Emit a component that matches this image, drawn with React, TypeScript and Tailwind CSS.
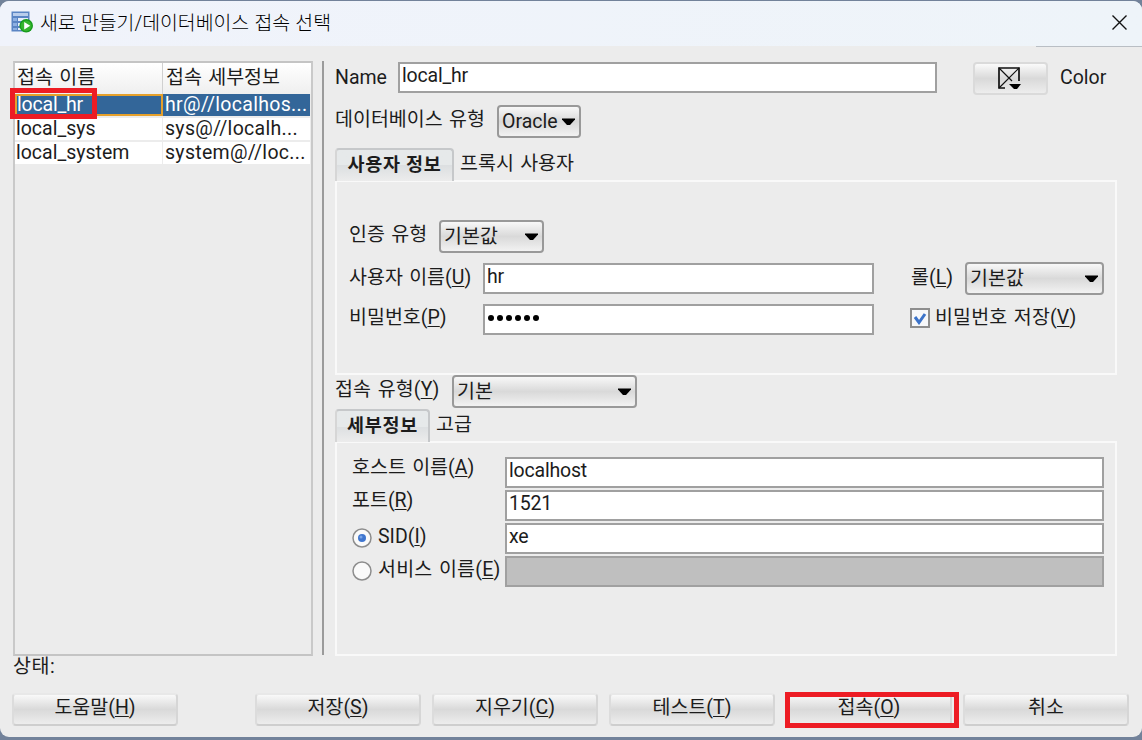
import React from 'react';

interface Connection {
  name: string;
  details: string;
}

const connections: Connection[] = [
  { name: 'local_hr', details: 'hr@//localhos...' },
  { name: 'local_sys', details: 'sys@//localh...' },
  { name: 'local_system', details: 'system@//loc...' },
];

interface LabelProps {
  text: string;
  mnemonic?: string;
  className?: string;
}

const Label: React.FC<LabelProps> = ({ text, mnemonic, className = '' }) => (
  <span className={`whitespace-nowrap leading-6 [word-spacing:1.5px] ${className}`}>
    {text}
    {mnemonic && (
      <>
        (<span className="underline decoration-1 underline-offset-2">{mnemonic}</span>)
      </>
    )}
  </span>
);

const Arrow = () => (
  <svg width="13" height="8" viewBox="0 0 13 8" className="shrink-0">
    <path d="M0 0.5h13v1L8 7H5L0 1.5z" fill="#000" />
  </svg>
);

const Select: React.FC<{ value: string; className?: string }> = ({ value, className = '' }) => (
  <button
    className={`flex h-[33px] items-center justify-between rounded-[4px] border-2 border-[#999] bg-linear-to-b from-[#f8f8f8] via-[#d9d9d9] to-[#f2f2f2] pr-[4px] pl-[3px] ${className}`}
  >
    <span className="whitespace-nowrap leading-6">{value}</span>
    <Arrow />
  </button>
);

const Field: React.FC<{ value?: string; className?: string }> = ({ value, className = '' }) => (
  <div className={`h-[31px] border-2 border-[#a0a0a0] pl-[2px] leading-[23px] tracking-[-0.2px] ${className}`}>
    {value}
  </div>
);

const PushButton: React.FC<LabelProps> = ({ text, mnemonic, className = '' }) => (
  <button
    className={`flex h-[33px] w-[166px] justify-center rounded-[4px] border-2 border-t-[#e8e8e8] border-r-[#d6d6d6] border-b-[#cecece] border-l-[#dcdcdc] bg-linear-to-b from-[#f9f9f9] via-[#d9d9d9] to-[#ededed] pt-px ${className}`}
  >
    <Label text={text} mnemonic={mnemonic} />
  </button>
);

const Tabs: React.FC<{ active: string; other: string; activeClass: string }> = ({ active, other, activeClass }) => (
  <div className="flex h-[32px]">
    <div
      className={`relative z-10 h-[33px] rounded-t-[4px] border-2 border-b-0 border-[#c6c8ca] border-l-[#d6d6d6] bg-linear-to-b from-[#e6e9ea] from-50% via-[#dcdfe1] via-50% to-[#ececec] text-center font-bold ${activeClass}`}
    >
      <span className="text-[18.5px] leading-[27px] tracking-[0.7px]">{active}</span>
    </div>
    <Label text={other} className="ml-[6px] pt-[4px]" />
  </div>
);

const Radio: React.FC<{ checked?: boolean }> = ({ checked }) => (
  <svg width="20" height="20" viewBox="0 0 20 20" className="shrink-0">
    <circle cx="10" cy="10" r="9" fill="#fafafa" stroke="#8d8d8d" strokeWidth="1.5" />
    {checked && <circle cx="10" cy="10" r="4" fill="#3f76cf" />}
    {checked && <circle cx="9" cy="9" r="1.5" fill="#79a4e6" />}
  </svg>
);

const TitleBar = () => (
  <header className="flex h-[45px] items-center rounded-t-[9px] bg-linear-to-r from-[#f0f3fb] to-[#eef4f9] pl-[11px]">
    <svg width="23" height="23" viewBox="0 0 23 23" className="-mt-[3px]">
      <rect x="0.5" y="0.5" width="18" height="20" fill="#5b85c4" />
      <path d="M2 2h15v3H2z" fill="#b9cdec" />
      <path d="M2 7h4v3H2zM2 12h4v3H2zM2 17h4v2H2z" fill="#8eb0e2" />
      <path d="M7 7h10v3H7zM7 12h10v3H7zM7 17h10v2H7z" fill="#e6eefa" />
      <circle cx="15.2" cy="14.8" r="6.8" fill="#169b1b" />
      <circle cx="15.2" cy="14.8" r="5.4" fill="#35b52e" />
      <path d="M13.2 11l6 3.8-6 3.8z" fill="#fff" />
    </svg>
    <h1 className="ml-[6px] text-[19.4px] leading-6 font-light whitespace-nowrap text-black [word-spacing:0.5px]">
      새로 만들기/데이터베이스 접속 선택
    </h1>
    <button className="mr-[15px] -mt-[2px] ml-auto">
      <svg width="15" height="15" viewBox="0 0 15 15">
        <path d="M0.5 0.5l14 14M14.5 0.5l-14 14" stroke="#111" strokeWidth="1.4" />
      </svg>
    </button>
  </header>
);

const ConnectionTable = () => (
  <div className="relative h-[595px] w-[300px] border-2 border-t-[#c4c4c4] border-r-[#c9c9c9] border-b-[#c4c4c4] border-l-[#c9c9c9]">
    <div className="flex h-[31px] bg-linear-to-b from-white to-[#efefef] [word-spacing:1.5px]">
      <div className="w-[148px] border-r border-[#d0d0d0] pl-[2px] leading-[29px]">접속 이름</div>
      <div className="pl-[3px] leading-[29px]">접속 세부정보</div>
    </div>
    {connections.map((c, i) => (
      <div
        key={c.name}
        className={`mr-px flex h-6 border-b-2 border-[#ececec] leading-[21px] ${i === 0 ? 'bg-[#336699] text-white' : 'bg-white'}`}
      >
        <div
          className={`w-[148px] ${i === 0 ? 'border-2 border-[#e5a02b] leading-[17px] tracking-[-0.2px]' : 'border-r border-[#ececec] pl-[1px]'}`}
        >
          {c.name}
        </div>
        <div className="pl-[2px] tracking-[0.3px]">{c.details}</div>
      </div>
    ))}
    {/* highlight over the selected connection */}
    <div className="absolute top-[25px] left-[-5px] h-[31px] w-[87px] border-5 border-[#ed1c24]" />
  </div>
);

const UserInfoPanel = () => (
  <div className="h-[195px] w-[782px] border-2 border-[#f9f9f9]">
    <div className="mt-[38px] flex h-[33px] pl-[12px]">
      <Label text="인증 유형" className="w-[90px] pt-[3px]" />
      <Select value="기본값" className="w-[105px]" />
    </div>
    <div className="mt-[9px] flex h-[33px] pl-[12px]">
      <Label text="사용자 이름" mnemonic="U" className="w-[134px] pt-[4px]" />
      <Field value="hr" className="mt-px w-[391px] bg-white" />
      <Label text="롤" mnemonic="L" className="ml-[37px] w-[54px] pt-[4px]" />
      <Select value="기본값" className="w-[139px]" />
    </div>
    <div className="mt-[9px] flex h-[33px] pl-[12px]">
      <Label text="비밀번호" mnemonic="P" className="w-[134px] pt-[2px]" />
      <div className="flex h-[31px] w-[391px] gap-[3px] border-2 border-[#a0a0a0] bg-white pt-[9px] pl-[3px]">
        {[0, 1, 2, 3, 4, 5].map((n) => (
          <span key={n} className="size-[6px] rounded-full bg-black" />
        ))}
      </div>
      <div className="mt-[4px] ml-[36px] flex size-5 items-center justify-center border-2 border-[#8e8e8e] bg-[#f7f8fa]">
        <svg width="14" height="14" viewBox="0 0 14 14">
          <path d="M2 6l4 5.5L12 3" fill="none" stroke="#3b73ca" strokeWidth="3" />
        </svg>
      </div>
      <Label text="비밀번호 저장" mnemonic="V" className="ml-[5px] pt-[2px] tracking-[0.15px]" />
    </div>
  </div>
);

const DetailsPanel = () => (
  <div className="flex h-[215px] w-[782px] border-2 border-[#f9f9f9] pt-[14px] pl-[15px]">
    <div className="w-[153px]">
      <Label text="호스트 이름" mnemonic="A" className="-mt-px block h-[33px]" />
      <Label text="포트" mnemonic="R" className="block h-[33px]" />
      <div className="flex h-[33px] gap-[6px]">
        <div className="pt-[6px]">
          <Radio checked />
        </div>
        <Label text="SID" mnemonic="I" className="pt-[3px]" />
      </div>
      <div className="flex h-[33px] gap-[6px]">
        <div className="pt-[6px]">
          <Radio />
        </div>
        <Label text="서비스 이름" mnemonic="E" className="pt-[3px] tracking-[0.2px]" />
      </div>
    </div>
    <div className="flex flex-col gap-[2px]">
      <Field value="localhost" className="w-[599px] bg-white" />
      <Field value="1521" className="w-[599px] bg-white" />
      <Field value="xe" className="w-[599px] bg-white" />
      <Field className="w-[599px] bg-[#bfbfbf]" />
    </div>
  </div>
);

const App: React.FC = () => {
  return (
    <div className="h-[740px] w-[1142px] overflow-hidden bg-[#72829a] pt-px font-['Roboto','Noto_Sans_CJK_KR',sans-serif] text-[19.5px] text-[#1c1c1c]">
      <div className="flex h-[736px] flex-col rounded-[9px] bg-[#ececec]">
        <TitleBar />
        <div className="flex h-[609px]">
          <div className="pt-[15px] pl-[13px]">
            <ConnectionTable />
          </div>
          <div className="mt-[15px] ml-[9px] h-[594px] w-[2px] bg-[#9b9b9b]" />
          <main className="flex-1 pl-[11px]">
            <div className="ml-auto h-px w-[106px] bg-[#b9bec4]" />
            <div className="mt-[15px] flex h-[43px]">
              <Label text="Name" className="w-[63px] pt-[4px]" />
              <Field value="local_hr" className="w-[539px] bg-white" />
              <button className="ml-[36px] flex h-[33px] w-[75px] items-center justify-center rounded-[4px] border-2 border-[#dadada] bg-linear-to-b from-[#fafafa] via-[#d9d9d9] to-[#ededed]">
                <svg width="24" height="24" viewBox="0 0 24 24" fill="none" stroke="#111" className="-mt-[2px] -ml-[3px]">
                  <path d="M8 22H2V2h20v13" strokeWidth="1.7" />
                  <path d="M2 22L22 2M2 2l13 13" strokeWidth="1.2" />
                  <path d="M12 18h12l-4 5h-3z" fill="#000" stroke="none" />
                </svg>
              </button>
              <Label text="Color" className="ml-[12px] pt-[4px]" />
            </div>
            <div className="flex h-[43px]">
              <Label text="데이터베이스 유형" className="w-[162px] pt-[3px]" />
              <Select value="Oracle" className="w-[84px]" />
            </div>
            <Tabs active="사용자 정보" other="프록시 사용자" activeClass="w-[119px]" />
            <UserInfoPanel />
            <div className="flex h-[34px]">
              <Label text="접속 유형" mnemonic="Y" className="w-[117px] pt-[3px] tracking-[0.15px]" />
              <Select value="기본" className="w-[185px]" />
            </div>
            <Tabs active="세부정보" other="고급" activeClass="w-[95px]" />
            <DetailsPanel />
          </main>
        </div>
        <div className="h-[38px] pl-[13px]">
          <Label text="상태:" className="block tracking-[0.5px]" />
        </div>
        <footer className="flex gap-[11px] pl-[12px]">
          <PushButton text="도움말" mnemonic="H" className="mr-[66px]" />
          <PushButton text="저장" mnemonic="S" />
          <PushButton text="지우기" mnemonic="C" />
          <PushButton text="테스트" mnemonic="T" />
          <div className="relative">
            <PushButton text="접속" mnemonic="O" />
            <div className="absolute top-[-1px] left-[-1px] h-[36px] w-[174px] border-5 border-[#ed1c24]" />
          </div>
          <PushButton text="취소" />
        </footer>
      </div>
    </div>
  );
};

export default App;
